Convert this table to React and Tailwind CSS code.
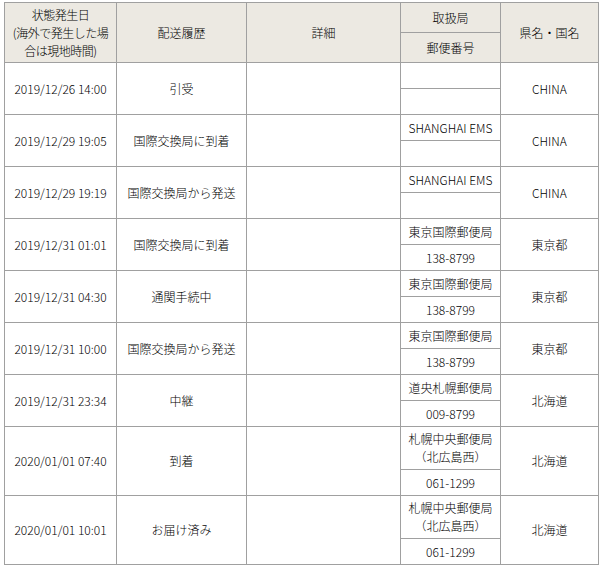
const rows = [
  { date: "2019/12/26 14:00", status: "引受", office: "", zip: "", pref: "CHINA" },
  { date: "2019/12/29 19:05", status: "国際交換局に到着", office: "SHANGHAI EMS", zip: "", pref: "CHINA" },
  { date: "2019/12/29 19:19", status: "国際交換局から発送", office: "SHANGHAI EMS", zip: "", pref: "CHINA" },
  { date: "2019/12/31 01:01", status: "国際交換局に到着", office: "東京国際郵便局", zip: "138-8799", pref: "東京都" },
  { date: "2019/12/31 04:30", status: "通関手続中", office: "東京国際郵便局", zip: "138-8799", pref: "東京都" },
  { date: "2019/12/31 10:00", status: "国際交換局から発送", office: "東京国際郵便局", zip: "138-8799", pref: "東京都" },
  { date: "2019/12/31 23:34", status: "中継", office: "道央札幌郵便局", zip: "009-8799", pref: "北海道" },
  { date: "2020/01/01 07:40", status: "到着", office: ["札幌中央郵便局", "（北広島西）"], zip: "061-1299", pref: "北海道", tall: true },
  { date: "2020/01/01 10:01", status: "お届け済み", office: ["札幌中央郵便局", "（北広島西）"], zip: "061-1299", pref: "北海道", tall: true },
];

const cell = "border border-[#a0a0a0] text-center align-middle px-0 py-0 leading-[18px] whitespace-nowrap font-light";
const head = `${cell} bg-[#ece9e2]`;

export default function App() {
  return (
    <div className="bg-white w-[602px] h-[572px] pt-[2px] pl-[4px] text-[12px] text-black" style={{ fontFamily: '"Noto Sans CJK JP", "Noto Sans", sans-serif' }}>
      <table className="border-collapse table-fixed w-[594px]">
        <colgroup>
          <col className="w-[112px]" />
          <col className="w-[130px]" />
          <col className="w-[154px]" />
          <col className="w-[100px]" />
          <col className="w-[98px]" />
        </colgroup>
        <thead>
          <tr className="h-[30px]">
            <th rowSpan={2} className={`${head} tracking-[-0.5px]`}>
              状態発生日
              <br />
              (海外で発生した場
              <br />
              合は現地時間)
            </th>
            <th rowSpan={2} className={head}>配送履歴</th>
            <th rowSpan={2} className={head}>詳細</th>
            <th className={head}>取扱局</th>
            <th rowSpan={2} className={head}>県名・国名</th>
          </tr>
          <tr className="h-[30px]">
            <th className={head}>郵便番号</th>
          </tr>
        </thead>
        <tbody>
          {rows.map((r, i) => (
            <>
              <tr key={`a${i}`} className={r.tall ? "h-[43px]" : "h-[26px]"}>
                <td rowSpan={2} className={cell}>{r.date}</td>
                <td rowSpan={2} className={cell}>{r.status}</td>
                <td rowSpan={2} className={cell}></td>
                <td className={cell}>
                  {Array.isArray(r.office) ? (
                    <>
                      {r.office[0]}
                      <br />
                      {r.office[1]}
                    </>
                  ) : (
                    r.office
                  )}
                </td>
                <td rowSpan={2} className={cell}>{r.pref}</td>
              </tr>
              <tr key={`b${i}`} className="h-[26px]">
                <td className={cell}>{r.zip}</td>
              </tr>
            </>
          ))}
        </tbody>
      </table>
    </div>
  );
}
